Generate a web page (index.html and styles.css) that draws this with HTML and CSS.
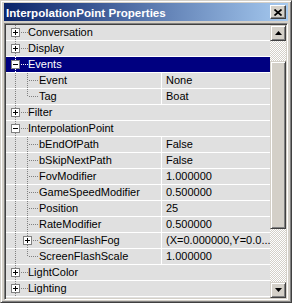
FILE: index.html
```html
<!DOCTYPE html>
<html lang="en">
<head>
<meta charset="UTF-8">
<title>InterpolationPoint Properties</title>
<link rel="stylesheet" href="styles.css">
</head>
<body>
<div class="window">
  <div class="titlebar">
    <span class="title">InterpolationPoint Properties</span>
    <span class="close"><svg width="8" height="7" viewBox="0 0 8 7"><path d="M0.5 0.5L7.5 6.5M7.5 0.5L0.5 6.5" stroke="#000" stroke-width="1.7"/></svg></span>
  </div>
  <div class="list">
    <div class="rows">
      <div class="row cat"><div class="name"><span class="elbow"><span class="box plus"></span></span><span class="label">Conversation</span></div></div>
      <div class="row cat"><div class="name"><span class="elbow"><span class="box plus"></span></span><span class="label">Display</span></div></div>
      <div class="row cat sel"><div class="name"><span class="elbow"><span class="box minus"></span></span><span class="label">Events</span></div></div>
      <div class="row l1"><div class="name"><span class="pipe"></span><span class="elbow"></span><span class="label">Event</span></div><div class="value">None</div></div>
      <div class="row l1 last"><div class="name"><span class="pipe"></span><span class="elbow"></span><span class="label">Tag</span></div><div class="value">Boat</div></div>
      <div class="row cat"><div class="name"><span class="elbow"><span class="box plus"></span></span><span class="label">Filter</span></div></div>
      <div class="row cat"><div class="name"><span class="elbow"><span class="box minus"></span></span><span class="label">InterpolationPoint</span></div></div>
      <div class="row l1"><div class="name"><span class="pipe"></span><span class="elbow"></span><span class="label">bEndOfPath</span></div><div class="value">False</div></div>
      <div class="row l1"><div class="name"><span class="pipe"></span><span class="elbow"></span><span class="label">bSkipNextPath</span></div><div class="value">False</div></div>
      <div class="row l1"><div class="name"><span class="pipe"></span><span class="elbow"></span><span class="label">FovModifier</span></div><div class="value">1.000000</div></div>
      <div class="row l1"><div class="name"><span class="pipe"></span><span class="elbow"></span><span class="label">GameSpeedModifier</span></div><div class="value">0.500000</div></div>
      <div class="row l1"><div class="name"><span class="pipe"></span><span class="elbow"></span><span class="label">Position</span></div><div class="value">25</div></div>
      <div class="row l1"><div class="name"><span class="pipe"></span><span class="elbow"></span><span class="label">RateModifier</span></div><div class="value">0.500000</div></div>
      <div class="row l1"><div class="name"><span class="pipe"></span><span class="elbow"><span class="box plus"></span></span><span class="label">ScreenFlashFog</span></div><div class="value">(X=0.000000,Y=0.0...</div></div>
      <div class="row l1 last"><div class="name"><span class="pipe"></span><span class="elbow"></span><span class="label">ScreenFlashScale</span></div><div class="value">1.000000</div></div>
      <div class="row cat"><div class="name"><span class="elbow"><span class="box plus"></span></span><span class="label">LightColor</span></div></div>
      <div class="row cat"><div class="name"><span class="elbow"><span class="box plus"></span></span><span class="label">Lighting</span></div></div>
    </div>
    <div class="scroll">
      <div class="btn"><svg width="7" height="4" viewBox="0 0 7 4"><path d="M3.5 0L7 4H0Z" fill="#000"/></svg></div>
      <div class="track"><div class="thumb"></div></div>
      <div class="btn"><svg width="7" height="4" viewBox="0 0 7 4"><path d="M0 0H7L3.5 4Z" fill="#000"/></svg></div>
    </div>
  </div>
</div>
</body>
</html>
```

FILE: styles.css
```css
body { margin: 0; font-family: "Liberation Sans", Arial, sans-serif; font-size: 11px; color: #000; }
.window { width: 292px; height: 303px; box-sizing: border-box; background: #d4d0c8; border: 1px solid; border-color: #d4d0c8 #404040 #404040 #d4d0c8; box-shadow: inset 1px 1px #fff, inset -1px -1px #808080; padding: 2px 3px 2px 3px; display: flex; flex-direction: column; }
.titlebar { height: 18px; flex: none; display: flex; align-items: center; background: linear-gradient(to right, #0a246a, #a6caf0); color: #fff; font-weight: bold; font-size: 11.6px; padding: 0 2px 0 2px; }
.title { flex: 1; white-space: nowrap; }
.close { width: 16px; height: 14px; box-sizing: border-box; background: #d4d0c8; border: 1px solid; border-color: #fff #404040 #404040 #fff; box-shadow: inset -1px -1px #808080; display: flex; align-items: center; justify-content: center; }
.list { margin-top: 2px; flex: 1; min-height: 0; display: flex; border: 1px solid; border-color: #808080 #fff #fff #808080; box-shadow: inset 1px 1px #404040, inset -1px -1px #d4d0c8; padding: 1px; }
.rows { flex: 1; overflow: hidden; background: #e0e0e0; }
.row { --dot: #808080; display: flex; height: 15px; line-height: 15px; border-bottom: 1px solid #fff; white-space: nowrap; }
.row.sel { background: #000080; color: #fff; --dot: #fff; }
.name { width: 155px; flex: none; display: flex; border-right: 1px solid #fff; overflow: hidden; }
.cat .name { flex: 1; border-right: 0; }
.value { flex: 1; padding-left: 4px; overflow: hidden; }
.pipe { width: 12px; flex: none; background: repeating-linear-gradient(to bottom, var(--dot) 0 1px, transparent 1px 2px) 9px 0 / 1px 100% no-repeat; }
.elbow { width: 22px; flex: none; display: flex; align-items: center;
  background: repeating-linear-gradient(to bottom, var(--dot) 0 1px, transparent 1px 2px) 9px 0 / 1px 100% no-repeat,
              repeating-linear-gradient(to right, var(--dot) 0 1px, transparent 1px 2px) 11px 7px / 11px 1px no-repeat; }
.l1 .elbow { width: 21px; background-size: 1px 100%, 10px 1px; }
.last .elbow { background-size: 1px 8px, 10px 1px; }
.box { width: 9px; height: 9px; box-sizing: border-box; margin-left: 5px; border: 1px solid #808080; background: #fff; }
.box.plus { background: linear-gradient(#000, #000) center / 5px 1px no-repeat, linear-gradient(#000, #000) center / 1px 5px no-repeat, #fff; }
.box.minus { background: linear-gradient(#000, #000) center / 5px 1px no-repeat, #fff; }
.scroll { width: 16px; flex: none; display: flex; flex-direction: column; }
.btn { height: 16px; flex: none; box-sizing: border-box; background: #d4d0c8; border: 1px solid; border-color: #d4d0c8 #404040 #404040 #d4d0c8; box-shadow: inset 1px 1px #fff, inset -1px -1px #808080; display: flex; align-items: center; justify-content: center; }
.track { flex: 1; padding-top: 20px; background: conic-gradient(#fff 25%, #d4d0c8 0 50%, #fff 0 75%, #d4d0c8 0) 0 0 / 2px 2px; }
.thumb { height: 168px; box-sizing: border-box; background: #d4d0c8; border: 1px solid; border-color: #d4d0c8 #404040 #404040 #d4d0c8; box-shadow: inset 1px 1px #fff, inset -1px -1px #808080; }
```
